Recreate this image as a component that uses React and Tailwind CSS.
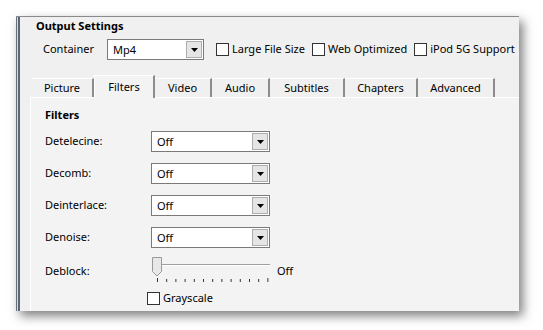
import React from 'react';

const font = { fontFamily: '"Noto Sans", "Segoe UI", sans-serif' };

// Windows-style dropdown box
const Combo = ({ value, width }) => (
  <div className={`flex h-[21px] ${width} items-center border border-[#7a7a7a] bg-white`}>
    <span className="flex-1 pl-[5px] text-[11px] leading-none text-black">{value}</span>
    <div className="mr-px flex h-[17px] w-[16px] items-center justify-center border border-[#adadad] bg-[#e5e5e5]">
      <svg width="7" height="4" viewBox="0 0 7 4">
        <path d="M0 0h7L3.5 4z" fill="#000" />
      </svg>
    </div>
  </div>
);

const Check = ({ label }) => (
  <label className="flex items-center gap-[3px] whitespace-nowrap text-[11px] text-black">
    <span className="h-[13px] w-[13px] border border-[#333] bg-white" />
    <span>{label}</span>
  </label>
);

const tabs = [
  ['Picture', 'w-[62px]'],
  ['Filters', 'w-[61px]'],
  ['Video', 'w-[57px]'],
  ['Audio', 'w-[58px]'],
  ['Subtitles', 'w-[75px]'],
  ['Chapters', 'w-[73px]'],
  ['Advanced', 'w-[77px]'],
];

const rows = ['Detelecine:', 'Decomb:', 'Deinterlace:', 'Denoise:'];

const Slider = () => (
  <svg width="120" height="26" viewBox="0 0 120 26">
    <line x1="5" y1="7.5" x2="119" y2="7.5" stroke="#a0a0a0" />
    <line x1="5" y1="8.5" x2="119" y2="8.5" stroke="#fff" />
    <path d="M1.5 0.5h9v14l-4.5 4.5l-4.5-4.5z" fill="#e8e8e8" stroke="#9a9a9a" />
    {Array.from({ length: 13 }).map((_, i) => (
      <line
        key={i}
        x1={6.5 + i * 9.2}
        x2={6.5 + i * 9.2}
        y1={i === 0 || i === 12 ? 21 : 22}
        y2="25"
        stroke="#333"
      />
    ))}
  </svg>
);

export default function App() {
  return (
    <div className="h-[330px] w-[543px] overflow-hidden bg-white pl-[16px] pt-[16px]" style={font}>
      <div className="flex h-[295px] w-[503px] overflow-hidden border-t border-[#8a8a8a] bg-[#f0f0f0] shadow-[4px_5px_10px_rgba(0,0,0,0.5)]">
        {/* left window edge */}
        <div className="w-px bg-[#6f6f6f]" />
        <div className="w-px bg-[#d8d8d8]" />
        <div className="w-[2px] bg-[#54687f]" />

        <div className="flex flex-1 flex-col">
          <div className="pl-[16px] pt-px text-[11px] font-bold leading-[16px] text-black">Output Settings</div>

          <div className="mt-[5px] flex items-center pl-[23px]">
            <span className="w-[64px] text-[11px] text-black">Container</span>
            <Combo value="Mp4" width="w-[97px]" />
            <div className="ml-[12px] flex items-center gap-[7px]">
              <Check label="Large File Size" />
              <Check label="Web Optimized" />
              <Check label="iPod 5G Support" />
            </div>
          </div>

          {/* tabs */}
          <div className="mt-[15px] flex h-[22px] items-end pl-[12px]">
            {tabs.map(([t, w]) =>
              t === 'Filters' ? (
                <div
                  key={t}
                  className={`${w} relative z-10 -mb-px flex h-[23px] items-center justify-center border-l border-t border-r-2 border-l-white border-t-white border-r-[#8c8c8c] bg-[#f3f3f3] text-[11px] text-black`}
                >
                  {t}
                </div>
              ) : (
                <div
                  key={t}
                  className={`${w} flex h-[19px] items-center justify-center border-t border-r-2 border-t-white border-r-[#8c8c8c] text-[11px] text-black`}
                >
                  {t}
                </div>
              )
            )}
          </div>

          {/* tab content */}
          <div className="ml-[10px] flex-1 border-l border-t border-white bg-[#f3f3f3] pl-[14px] pt-[9px]">
            <div className="text-[11px] font-bold leading-[16px] text-black">Filters</div>
            <div className="mt-[8px] flex flex-col gap-[11px]">
              {rows.map((r) => (
                <div key={r} className="flex items-center">
                  <span className="w-[106px] text-[11px] text-black">{r}</span>
                  <Combo value="Off" width="w-[119px]" />
                </div>
              ))}
            </div>
            <div className="mt-[9px] flex items-start">
              <span className="mt-[6px] w-[106px] text-[11px] text-black">Deblock:</span>
              <Slider />
              <span className="ml-[6px] mt-[6px] text-[11px] text-black">Off</span>
            </div>
            <div className="ml-[102px] mt-[7px]">
              <Check label="Grayscale" />
            </div>
          </div>
        </div>
      </div>
    </div>
  );
}
